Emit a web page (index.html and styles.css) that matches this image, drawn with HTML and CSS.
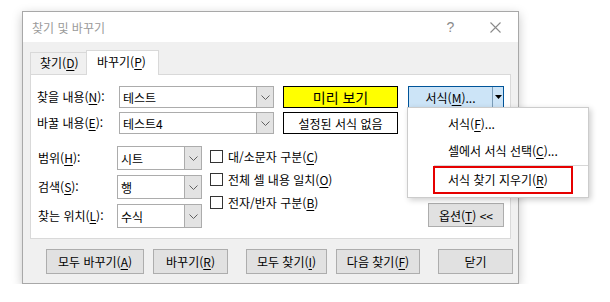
FILE: index.html
```html
<!DOCTYPE html>
<html lang="ko">
<head>
    <meta charset="UTF-8">
    <title>찾기 및 바꾸기</title>
    <link rel="stylesheet" href="styles.css">
</head>
<body>

    <div class="dialog">
        <div class="titlebar">
            <span class="title">찾기 및 바꾸기</span>
            <span class="title-btn help">?</span>
            <span class="title-btn close">
                <svg width="11" height="11" viewBox="0 0 11 11"><path d="M0.5 0.5L10.5 10.5M10.5 0.5L0.5 10.5" stroke="#8a8a8a" stroke-width="1.1" fill="none"/></svg>
            </span>
        </div>

        <div class="tabs">
            <div class="tab">찾기(<u>D</u>)</div>
            <div class="tab active">바꾸기(<u>P</u>)</div>
        </div>

        <div class="panel">
            <div class="row">
                <label class="label">찾을 내용(<u>N</u>):</label>
                <div class="combo wide">
                    <span class="combo-text">테스트</span>
                    <span class="combo-btn"><svg width="9" height="5" viewBox="0 0 9 5"><polyline points="0.5,0.5 4.5,4.5 8.5,0.5" stroke="#606060" fill="none"/></svg></span>
                </div>
                <div class="preview">미리 보기</div>
                <div class="format-wrap">
                    <div class="format-btn">
                        <span class="format-main">서식(<u>M</u>)...</span>
                        <span class="format-arrow"><svg width="7" height="4" viewBox="0 0 7 4"><polygon points="0,0 7,0 3.5,4" fill="#000"/></svg></span>
                    </div>
                    <div class="menu">
                        <div class="menu-item">서식(<u>F</u>)...</div>
                        <div class="menu-item">셀에서 서식 선택(<u>C</u>)...</div>
                        <div class="menu-sep"></div>
                        <div class="menu-item marked">서식 찾기 지우기(<u>R</u>)</div>
                    </div>
                </div>
            </div>
            <div class="row second">
                <label class="label">바꿀 내용(<u>E</u>):</label>
                <div class="combo wide">
                    <span class="combo-text">테스트4</span>
                    <span class="combo-btn"><svg width="9" height="5" viewBox="0 0 9 5"><polyline points="0.5,0.5 4.5,4.5 8.5,0.5" stroke="#606060" fill="none"/></svg></span>
                </div>
                <div class="no-format">설정된 서식 없음</div>
            </div>

            <div class="lower">
                <div class="options-grid">
                    <label class="label small">범위(<u>H</u>):</label>
                    <div class="combo narrow">
                        <span class="combo-text">시트</span>
                        <span class="combo-btn"><svg width="9" height="5" viewBox="0 0 9 5"><polyline points="0.5,0.5 4.5,4.5 8.5,0.5" stroke="#606060" fill="none"/></svg></span>
                    </div>
                    <label class="label small">검색(<u>S</u>):</label>
                    <div class="combo narrow">
                        <span class="combo-text">행</span>
                        <span class="combo-btn"><svg width="9" height="5" viewBox="0 0 9 5"><polyline points="0.5,0.5 4.5,4.5 8.5,0.5" stroke="#606060" fill="none"/></svg></span>
                    </div>
                    <label class="label small">찾는 위치(<u>L</u>):</label>
                    <div class="combo narrow">
                        <span class="combo-text">수식</span>
                        <span class="combo-btn"><svg width="9" height="5" viewBox="0 0 9 5"><polyline points="0.5,0.5 4.5,4.5 8.5,0.5" stroke="#606060" fill="none"/></svg></span>
                    </div>
                </div>
                <div class="checks">
                    <div class="check"><span class="box"></span>대/소문자 구분(<u>C</u>)</div>
                    <div class="check"><span class="box"></span>전체 셀 내용 일치(<u>O</u>)</div>
                    <div class="check"><span class="box"></span>전자/반자 구분(<u>B</u>)</div>
                </div>
                <div class="btn options">옵션(<u>T</u>) &lt;&lt;</div>
            </div>
        </div>

        <div class="actions">
            <div class="btn replace-all">모두 바꾸기(<u>A</u>)</div>
            <div class="btn replace">바꾸기(<u>R</u>)</div>
            <div class="btn find-all">모두 찾기(<u>I</u>)</div>
            <div class="btn find-next">다음 찾기(<u>F</u>)</div>
            <div class="btn close-btn">닫기</div>
        </div>
    </div>

</body>
</html>
```

FILE: styles.css
```css
body {
    margin: 0;
    background: #fff;
    font-family: "Noto Sans CJK KR", "Noto Sans", sans-serif;
    font-size: 12px;
    color: #000;
}
u {
    text-decoration-thickness: 1px;
    text-underline-offset: 2px;
}
.dialog {
    margin: 11px 0 0 22px;
    width: 497px;
    height: 273px;
    box-sizing: border-box;
    background: #f0f0f0;
    border: 1px solid #a8a8a8;
    box-shadow: 0 3px 10px rgba(0, 0, 0, 0.22);
}
.titlebar {
    height: 30px;
    background: #fff;
    display: flex;
    align-items: center;
    padding-left: 9px;
}
.title {
    color: #9a9a9a;
    flex: 1;
}
.title-btn {
    width: 45px;
    height: 30px;
    display: flex;
    align-items: center;
    justify-content: center;
    color: #8a8a8a;
    font-family: "Liberation Sans", sans-serif;
    font-size: 14px;
}
.tabs {
    display: flex;
    align-items: flex-end;
    padding: 8px 0 0 7px;
    height: 24px;
}
.tab {
    height: 22px;
    box-sizing: border-box;
    border: 1px solid #d9d9d9;
    border-right: none;
    border-bottom: none;
    padding-left: 9px;
    width: 56px;
    line-height: 20px;
}
.tab.active {
    height: 25px;
    width: 73px;
    background: #fff;
    border-right: 1px solid #d9d9d9;
    padding-left: 10px;
    margin-bottom: -1px;
    position: relative;
    line-height: 21px;
}
.panel {
    margin: 0 7px;
    height: 165px;
    box-sizing: border-box;
    background: #fff;
    border: 1px solid #d9d9d9;
    padding: 11px 6px 0 6px;
}
.row {
    display: flex;
    align-items: center;
    height: 22px;
}
.row.second {
    margin-top: 4px;
}
.label {
    width: 82px;
    line-height: 22px;
}
.combo {
    display: flex;
    box-sizing: border-box;
    border: 1px solid #acacac;
    background: #fff;
}
.combo.wide {
    width: 155px;
    height: 22px;
}
.combo.narrow {
    width: 85px;
    height: 24px;
}
.combo-text {
    flex: 1;
    padding-left: 3px;
    display: flex;
    align-items: center;
}
.combo-btn {
    width: 16px;
    background: #e3e3e3;
    border-left: 1px solid #acacac;
    display: flex;
    align-items: center;
    justify-content: center;
}
.wide .combo-btn {
    width: 16px;
}
.preview, .no-format {
    margin-left: 9px;
    width: 115px;
    height: 22px;
    box-sizing: border-box;
    border: 1px solid #000;
    display: flex;
    align-items: center;
    justify-content: center;
}
.preview {
    background: #ffff00;
    font-size: 14px;
}
.format-wrap {
    margin-left: 10px;
    position: relative;
}
.format-btn {
    width: 96px;
    height: 22px;
    box-sizing: border-box;
    background: #cce4f7;
    border: 1px solid #005499;
    display: flex;
}
.format-main {
    width: 83px;
    display: flex;
    align-items: center;
    justify-content: center;
    border-right: 1px solid #7a9cb8;
}
.format-arrow {
    flex: 1;
    display: flex;
    align-items: center;
    justify-content: center;
}
.menu {
    position: absolute;
    left: -1px;
    top: 21px;
    width: 182px;
    height: 91px;
    box-sizing: border-box;
    background: #fff;
    border: 1px solid #cccccc;
    box-shadow: 2px 2px 6px rgba(0, 0, 0, 0.2);
    padding-top: 2px;
    z-index: 2;
}
.menu-item {
    height: 27px;
    line-height: 27px;
    padding-left: 40px;
}
.menu-sep {
    height: 1px;
    background: #d7d7d7;
    margin: 1px 0 0 26px;
}
.menu-item.marked {
    margin-left: 25px;
    width: 140px;
    box-sizing: border-box;
    height: 28px;
    line-height: 24px;
    border: 2px solid #e60000;
    padding-left: 13px;
}
.lower {
    display: flex;
    margin-top: 12px;
    height: 82px;
}
.options-grid {
    display: grid;
    grid-template-columns: 79px 85px;
    grid-auto-rows: 24px;
    row-gap: 5px;
    padding-left: 1px;
}
.label.small {
    width: auto;
    line-height: 24px;
}
.checks {
    margin-left: 8px;
    margin-top: -1px;
}
.check {
    height: 23px;
    display: flex;
    align-items: center;
}
.box {
    width: 13px;
    height: 13px;
    box-sizing: border-box;
    border: 1px solid #333;
    background: #fff;
    margin-right: 5px;
}
.btn {
    height: 25px;
    box-sizing: border-box;
    background: #e1e1e1;
    border: 1px solid #adadad;
    display: flex;
    align-items: center;
    justify-content: center;
}
.btn.options {
    margin-left: auto;
    align-self: flex-end;
    width: 76px;
    height: 24px;
    margin-bottom: 1px;
}
.actions {
    display: flex;
    margin-top: 10px;
    padding-left: 23px;
}
.replace-all { width: 98px; }
.replace { width: 75px; margin-left: 9px; }
.find-all { width: 81px; margin-left: 18px; }
.find-next { width: 84px; margin-left: 9px; }
.close-btn { width: 75px; margin-left: 18px; }
```
